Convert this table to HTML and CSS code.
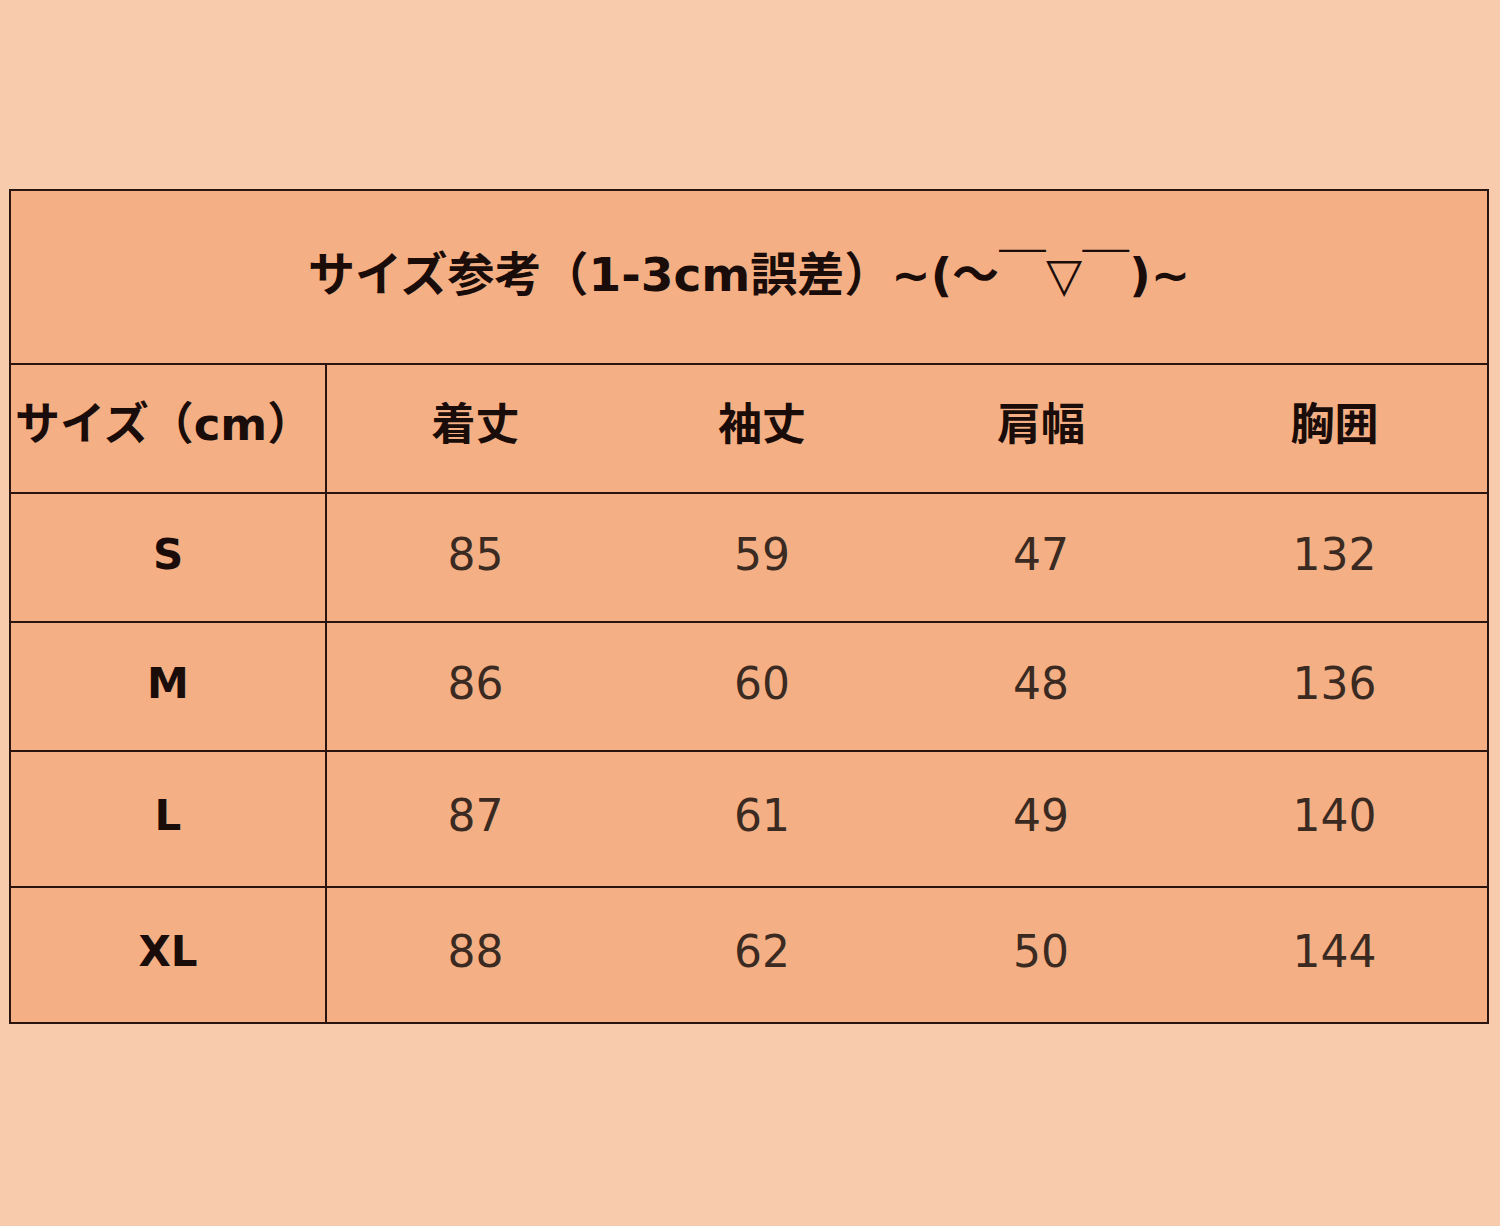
FILE: index.html
```html
<!DOCTYPE html>
<html lang="ja">
<head>
<meta charset="utf-8">
<title>サイズ参考</title>
<link rel="stylesheet" href="styles.css">
</head>
<body>
<table class="size-table">
  <colgroup>
    <col class="c-size"><col class="c2"><col class="c3"><col class="c4"><col class="c5">
  </colgroup>
  <tr class="r-title"><td colspan="5" class="title">サイズ参考（1-3cm誤差）~(～￣▽￣)~</td></tr>
  <tr class="r-head"><th class="size-head">サイズ（cm）</th><th>着丈</th><th>袖丈</th><th>肩幅</th><th>胸囲</th></tr>
  <tr class="r-a"><th class="size">S</th><td>85</td><td>59</td><td>47</td><td>132</td></tr>
  <tr class="r-a"><th class="size">M</th><td>86</td><td>60</td><td>48</td><td>136</td></tr>
  <tr class="r-b"><th class="size">L</th><td>87</td><td>61</td><td>49</td><td>140</td></tr>
  <tr class="r-b"><th class="size">XL</th><td>88</td><td>62</td><td>50</td><td>144</td></tr>
</table>
</body>
</html>
```
FILE: styles.css
```css
html, body {
  margin: 0;
  padding: 0;
  background: #F8CBAD;
}
body {
  padding: 189px 0 0 9px;
  height: 1226px;
  box-sizing: border-box;
}
.size-table {
  border-collapse: collapse;
  table-layout: fixed;
  width: 1478px;
  background: #F4B084;
  border: 2px solid #2a1410;
}
.c-size { width: 316px; }
.c2 { width: 298px; }
.c3 { width: 276px; }
.c4 { width: 282px; }
.c5 { width: 306px; }
td, th {
  padding: 0;
  text-align: center;
  vertical-align: middle;
  border-top: 2px solid #2a1410;
  border-bottom: 2px solid #2a1410;
}
td {
  font-family: "DejaVu Sans", "Noto Sans CJK JP", sans-serif;
  font-size: 44px;
  font-weight: normal;
  color: #3a2a22;
  padding-bottom: 7px;
}
th {
  font-family: "DejaVu Sans", "Noto Sans CJK JP", sans-serif;
  font-weight: bold;
  color: #1a0c08;
  padding-bottom: 7px;
}
.r-head th {
  font-family: "Noto Sans CJK JP", sans-serif;
  font-size: 44px;
  font-weight: bold;
  padding-bottom: 16px;
}
.r-head th.size-head {
  font-family: "DejaVu Sans", "Noto Sans CJK JP", sans-serif;
  font-size: 45px;
}
.size-head, .size {
  border-right: 2px solid #2a1410;
}
.size-head {
  text-align: left;
  padding-left: 4px;
  white-space: nowrap;
}
.size {
  font-size: 42px;
}
.r-title { height: 174px; }
.r-head { height: 129px; }
.r-a { height: 129px; }
.r-b { height: 136px; }
td.title {
  font-family: "DejaVu Sans", "Noto Sans CJK JP", sans-serif;
  font-size: 47px;
  font-weight: bold;
  color: #1a0c08;
  padding-bottom: 14px;
  white-space: nowrap;
}
```
